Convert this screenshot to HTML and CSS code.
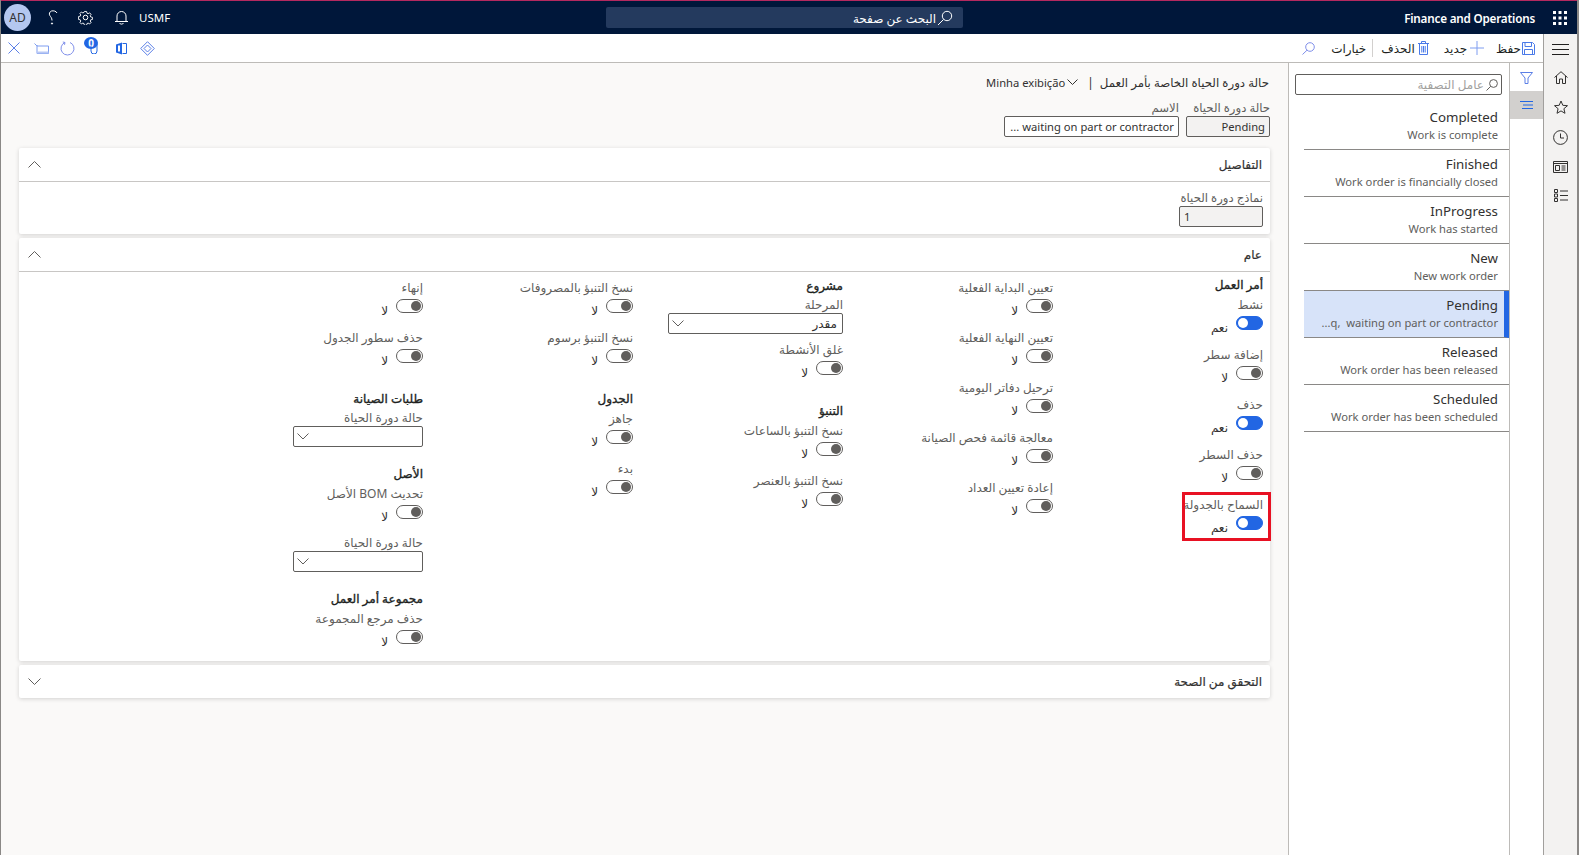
FILE: index.html
```html
<!DOCTYPE html>
<html lang="ar" dir="rtl">
<head>
  <meta charset="UTF-8">
  <title>Finance and Operations</title>
  <link rel="stylesheet" href="styles.css">
</head>
<body>
  <header class="topbar">
    <div class="top-right">
      <svg class="waffle" width="14" height="14" viewBox="0 0 14 14" fill="#fff"><rect x="0" y="0" width="3" height="3"/><rect x="5.500" y="0" width="3" height="3"/><rect x="11" y="0" width="3" height="3"/><rect x="0" y="5.500" width="3" height="3"/><rect x="5.500" y="5.500" width="3" height="3"/><rect x="11" y="5.500" width="3" height="3"/><rect x="0" y="11" width="3" height="3"/><rect x="5.500" y="11" width="3" height="3"/><rect x="11" y="11" width="3" height="3"/></svg>
      <span class="app-name" dir="ltr">Finance and Operations</span>
    </div>
    <div class="top-search">
      <svg width="16" height="16" viewBox="0 0 16 16" fill="none" stroke="#fff" stroke-width="1"><circle cx="10" cy="6" r="4.700"/><path d="M6.600 9.400 1 15"/></svg>
      <span>البحث عن صفحة</span>
    </div>
    <div class="top-left">
      <span class="company" dir="ltr">USMF</span>
      <svg class="top-bell" width="13" height="15" viewBox="0 0 13 15" fill="none" stroke="#fff" stroke-width="1"><path d="M2 11.500V6a4.500 4.500 0 0 1 9 0v5.500M0 11.500h13M4.500 13c.5 1.500 3.500 1.500 4 0"/></svg>
      <svg class="top-gear" width="15" height="15" viewBox="0 0 15 15" fill="none" stroke="#fff" stroke-width="1"><circle cx="7.500" cy="7.500" r="2.300"/><path d="M6.300.8h2.400l.4 1.900 1.300.6 1.700-1 1.600 1.700-1 1.600.6 1.300 1.900.4v2.400l-1.900.4-.6 1.300 1 1.600-1.600 1.700-1.700-1-1.300.6-.4 1.900H6.300l-.4-1.900-1.300-.6-1.700 1-1.600-1.700 1-1.600-.6-1.300-1.900-.4V6.400l1.900-.4.6-1.300-1-1.600 1.600-1.700 1.700 1 1.300-.6z" transform="translate(.75 .75) scale(.9)"/></svg>
      <svg class="top-help" width="10" height="15" viewBox="0 0 10 15" fill="none" stroke="#fff" stroke-width="1"><path d="M9 3C8 1 5.500.5 3.500 1 1.500 1.800.8 3.800 1.800 5.500 2.800 7 4 8 4 10.500"/><circle cx="4" cy="13.500" r=".6" fill="#fff"/></svg>
      <span class="avatar" dir="ltr">AD</span>
    </div>
  </header>

  <div class="shell">
    <nav class="side-nav">
      <svg width="17" height="11" viewBox="0 0 17 11" fill="none" stroke="#201f1e"><path d="M0 .500h17M0 5.500h17M0 10.500h17"/></svg>
      <svg width="14" height="13" viewBox="0 0 14 13" fill="none" stroke="#323130"><path d="M.5 6.500 7 .7l6.500 5.800M2.500 5v7.500h3V8h3v4.500h3V5"/></svg>
      <svg width="14" height="14" viewBox="0 0 14 14" fill="none" stroke="#323130"><path d="M7 1l1.800 4.300 4.700.4-3.600 3 1.100 4.600L7 10.900l-4 2.400 1.100-4.600-3.600-3 4.700-.4z"/></svg>
      <svg width="15" height="15" viewBox="0 0 15 15" fill="none" stroke="#323130"><circle cx="7.500" cy="7.500" r="6.900"/><path d="M7.500 3.500v4.500H11"/></svg>
      <svg width="15" height="12" viewBox="0 0 15 12" fill="none" stroke="#323130"><path d="M.5.500h14v11H.5zM.5 2.500h14M2.500 4.500h4v5h-4zM8.500 5h4M8.500 7h4M8.500 9h4"/></svg>
      <svg width="14" height="13" viewBox="0 0 14 13" fill="none" stroke="#323130"><path d="M.5.500h3v3h-3zM.5 5h3v3h-3zM.5 9.500h3v3h-3zM6 2h8M6 6.500h8M6 11h8"/></svg>
    </nav>

    <div class="workspace">
      <div class="toolbar">
        <div class="actions">
          <span class="action action-save">
            <svg width="13" height="13" viewBox="0 0 13 13" fill="none" stroke="#4a7ae8"><path d="M.5.500h10l2 2v10H.5zM3 .500v4h6.500v-4M2.500 12.500v-5h8v5"/></svg>
            <span>حفظ</span>
          </span>
          <span class="action action-new">
            <svg width="14" height="14" viewBox="0 0 14 14" fill="none" stroke="#7f9df0"><path d="M7 0v14M0 7h14"/></svg>
            <span>جديد</span>
          </span>
          <span class="action action-delete">
            <svg width="11" height="14" viewBox="0 0 11 14" fill="none" stroke="#4a7ae8"><path d="M0 2.500h11M3.500 2.500V.500h4v2M1.500 2.500v11h8v-11M3.800 5v6.500M5.500 5v6.500M7.200 5v6.500"/></svg>
            <span>الحذف</span>
          </span>
          <span class="tool-sep"></span>
          <span class="action options">خيارات</span>
          <svg class="tool-search" width="13" height="13" viewBox="0 0 13 13" fill="none" stroke="#7f8fea"><circle cx="8" cy="5" r="4.300"/><path d="M5 8.200.5 12.500"/></svg>
        </div>
        <div class="quick-icons">
          <svg class="q-close" width="12" height="12" viewBox="0 0 12 12" fill="none" stroke="#5b7fe6"><path d="M11.500.5l-11 11M.5.500l11 11"/></svg>
          <svg class="q-folder" width="15" height="12" viewBox="0 0 15 12" fill="none" stroke="#7f9df0"><path d="M.5 1.500 3 4h11.500v7.500H3V3"/><path d="M3 10.500h11.500" stroke="#b9c8f4" stroke-width="2"/></svg>
          <svg class="q-refresh" width="15" height="15" viewBox="0 0 15 15" fill="none" stroke="#7f8fea"><path d="M5 1.500a6.500 6.500 0 1 0 5 0M5 1.500 2.800 1M5 1.500 4.500 3.800"/></svg>
          <span class="attach"><span class="attach-count" dir="ltr">0</span>
            <svg width="8" height="11" viewBox="0 0 8 11" fill="none" stroke="#2266e3"><path d="M7 1v7a3 3 0 0 1-6 0V3"/></svg>
          </span>
          <svg class="q-office" width="12" height="13" viewBox="0 0 12 13" fill="none"><path d="M1 2.500 7 .500v12l-6-2z" fill="#2266e3"/><path d="M4 3.500v6" stroke="#fff" stroke-width="2"/><path d="M7.500 1.500h4v10h-4" stroke="#2266e3"/></svg>
          <svg class="q-power" width="15" height="15" viewBox="0 0 15 15" fill="none" stroke="#5b7fe6"><path d="M7.500.7 14.300 7.500 7.500 14.300.7 7.500z"/><path d="M7.500 4 11 7.500 7.500 11 4 7.500z"/></svg>
        </div>
      </div>

      <div class="panes">
        <aside class="rail">
          <svg class="rail-filter" width="13" height="12" viewBox="0 0 13 12" fill="none" stroke="#5b7fe6"><path d="M.5.500h12L8 6v5.500H5V6z"/></svg>
          <div class="rail-active">
            <svg width="13" height="8" viewBox="0 0 13 8" fill="none" stroke="#2266e3"><path d="M0 .500h13M3 4h10M2 7.500h11"/></svg>
          </div>
        </aside>

        <aside class="filter-pane">
          <div class="filter-box">
            <svg width="12" height="12" viewBox="0 0 12 12" fill="none" stroke="#605e5c"><circle cx="7.500" cy="4.500" r="3.900"/><path d="M4.700 7.300.5 11.500"/></svg>
            <span>عامل التصفية</span>
          </div>
          <ul class="status-list">
            <li><b>Completed</b><span>Work is complete</span></li>
            <li><b>Finished</b><span>Work order is financially closed</span></li>
            <li><b>InProgress</b><span>Work has started</span></li>
            <li><b>New</b><span>New work order</span></li>
            <li class="selected"><b>Pending</b><span>...q,  waiting on part or contractor</span></li>
            <li><b>Released</b><span>Work order has been released</span></li>
            <li><b>Scheduled</b><span>Work order has been scheduled</span></li>
          </ul>
        </aside>

        <main class="content">
          <div class="page-title">
            <span>حالة دورة الحياة الخاصة بأمر العمل</span>
            <span class="title-bar">|</span>
            <svg width="11" height="6" viewBox="0 0 11 6" fill="none" stroke="#323130"><path d="M.5.500 5.500 5.500 10.500.500"/></svg>
            <span class="view-name" dir="ltr">Minha exibição</span>
          </div>
          <div class="record-fields">
            <div class="record-field narrow">
              <label>حالة دورة الحياة</label>
              <div class="input readonly latin">Pending</div>
            </div>
            <div class="record-field wide">
              <label>الاسم</label>
              <div class="input latin" dir="ltr">... waiting on part or contractor</div>
            </div>
          </div>

          <section class="card">
            <div class="card-head">
              <h3>التفاصيل</h3>
              <svg width="13" height="7" viewBox="0 0 13 7" fill="none" stroke="#605e5c"><path d="M.5 6.500 6.500.5l6 6"/></svg>
            </div>
            <div class="details-body">
              <label>نماذج دورة الحياة</label>
              <div class="input readonly number latin">1</div>
            </div>
          </section>

          <section class="card">
            <div class="card-head">
              <h3>عام</h3>
              <svg width="13" height="7" viewBox="0 0 13 7" fill="none" stroke="#605e5c"><path d="M.5 6.500 6.500.5l6 6"/></svg>
            </div>
            <div class="general-body">
              <div class="col">
                <h4>أمر العمل</h4>
                <div class="field"><label>نشط</label><div class="switch-row"><span class="switch on"></span><span class="value">نعم</span></div></div>
                <div class="field"><label>إضافة سطر</label><div class="switch-row"><span class="switch"></span><span class="value">لا</span></div></div>
                <div class="field"><label>حذف</label><div class="switch-row"><span class="switch on"></span><span class="value">نعم</span></div></div>
                <div class="field"><label>حذف السطر</label><div class="switch-row"><span class="switch"></span><span class="value">لا</span></div></div>
                <div class="field"><label>السماح بالجدولة</label><div class="switch-row"><span class="switch on"></span><span class="value">نعم</span></div><span class="red-box"></span></div>
              </div>
              <div class="col plain">
                <div class="field"><label>تعيين البداية الفعلية</label><div class="switch-row"><span class="switch"></span><span class="value">لا</span></div></div>
                <div class="field"><label>تعيين النهاية الفعلية</label><div class="switch-row"><span class="switch"></span><span class="value">لا</span></div></div>
                <div class="field"><label>ترحيل دفاتر اليومية</label><div class="switch-row"><span class="switch"></span><span class="value">لا</span></div></div>
                <div class="field"><label>معالجة قائمة فحص الصيانة</label><div class="switch-row"><span class="switch"></span><span class="value">لا</span></div></div>
                <div class="field"><label>إعادة تعيين العداد</label><div class="switch-row"><span class="switch"></span><span class="value">لا</span></div></div>
              </div>
              <div class="col project">
                <h4>مشروع</h4>
                <div class="select-field"><label>المرحلة</label>
                  <div class="select wide"><span>مقدر</span><svg width="12" height="7" viewBox="0 0 12 7" fill="none" stroke="#605e5c"><path d="M.5.500l5.500 5.500 5.500-5.500"/></svg></div>
                </div>
                <div class="field"><label>غلق الأنشطة</label><div class="switch-row"><span class="switch"></span><span class="value">لا</span></div></div>
                <h4 class="later">التنبؤ</h4>
                <div class="field"><label>نسخ التنبؤ بالساعات</label><div class="switch-row"><span class="switch"></span><span class="value">لا</span></div></div>
                <div class="field"><label>نسخ التنبؤ بالعنصر</label><div class="switch-row"><span class="switch"></span><span class="value">لا</span></div></div>
              </div>
              <div class="col plain">
                <div class="field"><label>نسخ التنبؤ بالمصروفات</label><div class="switch-row"><span class="switch"></span><span class="value">لا</span></div></div>
                <div class="field"><label>نسخ التنبؤ برسوم</label><div class="switch-row"><span class="switch"></span><span class="value">لا</span></div></div>
                <h4 class="later">الجدول</h4>
                <div class="field"><label>جاهز</label><div class="switch-row"><span class="switch"></span><span class="value">لا</span></div></div>
                <div class="field"><label>بدء</label><div class="switch-row"><span class="switch"></span><span class="value">لا</span></div></div>
              </div>
              <div class="col plain">
                <div class="field"><label>إنهاء</label><div class="switch-row"><span class="switch"></span><span class="value">لا</span></div></div>
                <div class="field"><label>حذف سطور الجدول</label><div class="switch-row"><span class="switch"></span><span class="value">لا</span></div></div>
                <h4 class="later">طلبات الصيانة</h4>
                <div class="select-field"><label>حالة دورة الحياة</label>
                  <div class="select"><span></span><svg width="12" height="7" viewBox="0 0 12 7" fill="none" stroke="#605e5c"><path d="M.5.500l5.500 5.500 5.500-5.500"/></svg></div>
                </div>
                <h4 class="later">الأصل</h4>
                <div class="field"><label>تحديث BOM الأصل</label><div class="switch-row"><span class="switch"></span><span class="value">لا</span></div></div>
                <div class="select-field"><label>حالة دورة الحياة</label>
                  <div class="select"><span></span><svg width="12" height="7" viewBox="0 0 12 7" fill="none" stroke="#605e5c"><path d="M.5.500l5.500 5.500 5.500-5.500"/></svg></div>
                </div>
                <h4 class="later">مجموعة أمر العمل</h4>
                <div class="field"><label>حذف مرجع المجموعة</label><div class="switch-row"><span class="switch"></span><span class="value">لا</span></div></div>
              </div>
            </div>
          </section>

          <section class="card">
            <div class="card-head closed">
              <h3>التحقق من الصحة</h3>
              <svg width="13" height="7" viewBox="0 0 13 7" fill="none" stroke="#605e5c"><path d="M.5.500l6 6 6-6"/></svg>
            </div>
          </section>
        </main>
      </div>
    </div>
  </div>
</body>
</html>
```
FILE: styles.css
```css
html,
body {
  height: 100%;
}

body {
  margin: 0;
  font-family: "Noto Sans", "DejaVu Sans", sans-serif;
  font-size: 12px;
  color: #323130;
  background: #fff;
  display: flex;
  flex-direction: column;
  overflow: hidden;
  border-left: 1px solid #8a8886;
  border-right: 2px solid #8a8886;
  box-sizing: border-box;
}

.latin {
  font-size: 11.200px;
}

/* top bar */
.topbar {
  height: 34px;
  flex: none;
  box-sizing: border-box;
  background: #00173a;
  border-top: 1px solid #b4295f;
  color: #fff;
  display: grid;
  grid-template-columns: 614px 357px 1fr;
  align-items: center;
}

.top-right {
  display: flex;
  align-items: center;
  gap: 18px;
  padding-right: 10px;
}

.app-name {
  font-size: 11.700px;
  font-weight: 600;
  letter-spacing: -0.2px;
}

.top-search {
  height: 21px;
  background: #243a5e;
  border-radius: 2px;
  display: flex;
  align-items: center;
  gap: 1px;
  padding-right: 10px;
}

.top-search span {
  padding-top: 1px;
}

.top-left {
  display: flex;
  align-items: center;
  justify-content: flex-end;
  padding-left: 3px;
}

.company {
  font-size: 11.500px;
  margin-left: 11px;
}

.top-bell {
  margin-left: 22px;
}

.top-gear {
  margin-left: 20px;
}

.top-help {
  margin-left: 17px;
}

.avatar {
  width: 27px;
  height: 27px;
  border-radius: 50%;
  background: #b4c7f0;
  color: #323130;
  display: flex;
  align-items: center;
  justify-content: center;
}

/* shell */
.shell {
  flex: 1;
  display: flex;
  min-height: 0;
}

.side-nav {
  width: 34px;
  flex: none;
  box-sizing: border-box;
  background: #f3f2f1;
  border-left: 1px solid #a19f9d;
  display: flex;
  flex-direction: column;
  align-items: center;
  gap: 16px;
  padding-top: 10px;
}

.workspace {
  flex: 1;
  min-width: 0;
  display: flex;
  flex-direction: column;
}

.toolbar {
  height: 29px;
  flex: none;
  box-sizing: border-box;
  border-bottom: 1px solid #bdbbb8;
  background: #fff;
  display: flex;
  justify-content: space-between;
  align-items: center;
  padding-right: 8px;
}

.actions {
  display: flex;
  align-items: center;
}

.action {
  display: flex;
  align-items: center;
  gap: 3px;
  margin-left: 10px;
  color: #201f1e;
}

.action-save {
  gap: 1px;
  margin-left: 12px;
}

.action-new {
  margin-left: 15px;
}

.action-delete {
  margin-left: 8px;
}

.tool-sep {
  width: 1px;
  height: 18px;
  background: #d2d0ce;
  margin-left: 6px;
}

.tool-search {
  margin-right: 6px;
}

.quick-icons {
  display: flex;
  align-items: center;
  flex-direction: row-reverse;
  padding-left: 7px;
}

.q-folder {
  margin-left: 14px;
}

.q-refresh {
  margin-left: 11px;
}

.q-office {
  margin-left: 17px;
}

.q-power {
  margin-left: 13px;
}

.attach {
  position: relative;
  width: 16px;
  height: 17px;
  margin: -5px 0 0 7px;
}

.attach-count {
  display: block;
  width: 14px;
  height: 12px;
  border-radius: 50%;
  background: #2266e3;
  color: #fff;
  font-size: 10px;
  font-weight: 700;
  line-height: 12px;
  text-align: center;
}

.attach svg {
  position: absolute;
  left: 8px;
  top: 6px;
}

.panes {
  flex: 1;
  display: flex;
  min-height: 0;
}

.rail {
  width: 34px;
  flex: none;
  box-sizing: border-box;
  border-left: 1px solid #bdbbb8;
  background: #fff;
  display: flex;
  flex-direction: column;
  align-items: center;
}

.rail-filter {
  margin-top: 9px;
}

.rail-active {
  width: 100%;
  height: 28px;
  margin-top: 7px;
  background: #d2d0ce;
  display: flex;
  align-items: center;
  justify-content: center;
}

/* filter pane */
.filter-pane {
  width: 221px;
  flex: none;
  box-sizing: border-box;
  border-left: 1px solid #bdbbb8;
  background: #fff;
}

.filter-box {
  width: 207px;
  height: 21px;
  box-sizing: border-box;
  margin: 11px 7px 0 0;
  border: 1px solid #605e5c;
  border-radius: 2px;
  display: flex;
  align-items: center;
  gap: 2px;
  padding-right: 3px;
  color: #a19f9d;
}

.status-list {
  list-style: none;
  margin: 8px 0 0 0;
  padding: 0;
  width: 205px;
}

.status-list li {
  height: 47px;
  box-sizing: border-box;
  border-bottom: 1px solid #8a8886;
  padding: 4px 11px 0 0;
  display: flex;
  flex-direction: column;
}

.status-list b {
  font-size: 13.300px;
  font-weight: 400;
  line-height: 20px;
  color: #323130;
  direction: ltr;
  text-align: right;
}

.status-list span {
  font-size: 11.200px;
  line-height: 16px;
  color: #605e5c;
  white-space: pre;
  direction: ltr;
  text-align: right;
}

.status-list .selected {
  background: #d7e3f9;
  border-right: 5px solid #2266e3;
  padding-right: 6px;
}

/* main content */
.content {
  flex: 1;
  min-width: 0;
  background: #faf9f8;
  padding: 9px 19px 0 18px;
  overflow: hidden;
}

.page-title {
  display: flex;
  align-items: center;
  height: 20px;
  gap: 2px;
  font-size: 11.800px;
}

.title-bar {
  margin: 0 4px 0 7px;
}

.view-name {
  font-size: 11.200px;
}

.record-fields {
  display: flex;
  gap: 7px;
  margin: 7px -1px 11px 0;
}

.record-field label,
.details-body label {
  display: block;
  height: 17px;
  line-height: 17px;
  color: #605e5c;
  font-size: 11.700px;
}

.narrow {
  width: 84px;
}

.wide {
  width: 175px;
}

.input {
  height: 21px;
  box-sizing: border-box;
  border: 1px solid #605e5c;
  border-radius: 2px;
  line-height: 19px;
  padding: 0 4px;
  background: #fff;
  text-align: right;
  white-space: nowrap;
  overflow: hidden;
}

.readonly {
  background: #f3f2f1;
}

.card {
  margin: 0 -1px 4px 0;
  background: #fff;
  border-radius: 2px;
  box-shadow: 0 1px 4px rgba(0, 0, 0, 0.16);
}

.card-head {
  height: 34px;
  box-sizing: border-box;
  border-bottom: 1px solid #c8c6c4;
  display: flex;
  align-items: center;
  justify-content: space-between;
  padding: 0 8px 0 9px;
}

.card-head.closed {
  height: 33px;
  border-bottom: 0;
}

.card-head h3 {
  margin: 0;
  font-size: 12px;
  font-weight: 400;
  -webkit-text-stroke: 0.2px #323130;
}

.details-body {
  height: 52px;
  box-sizing: border-box;
  padding: 7px 7px 0 0;
}

.number {
  width: 84px;
  text-align: left;
}

/* general tab */
.general-body {
  display: grid;
  grid-template-columns: repeat(5, 210px);
  padding: 3px 7px 2px 0;
}

.col {
  display: flex;
  flex-direction: column;
}

.col.plain {
  padding-top: 3px;
}

.col.project {
  padding-top: 1px;
}

.col h4 {
  margin: 0;
  height: 20px;
  line-height: 20px;
  font-size: 12px;
  font-weight: 400;
  color: #201f1e;
  -webkit-text-stroke: 0.35px #201f1e;
}

.col h4.later {
  margin-top: 11px;
}

.field {
  position: relative;
  height: 50px;
}

.field label,
.select-field label {
  display: block;
  line-height: 20px;
  height: 20px;
  color: #605e5c;
  white-space: nowrap;
}

.switch-row {
  display: flex;
  gap: 8px;
  margin-top: 1px;
}

.switch {
  width: 27px;
  height: 14px;
  flex: none;
  box-sizing: border-box;
  border: 1px solid #605e5c;
  border-radius: 7px;
  background: #fff;
  display: flex;
  align-items: center;
  justify-content: flex-start;
  padding: 0 1px;
}

.switch::before {
  content: "";
  width: 10px;
  height: 10px;
  border-radius: 50%;
  background: #605e5c;
}

.switch.on {
  background: #2266e3;
  border-color: #2266e3;
  justify-content: flex-end;
}

.switch.on::before {
  background: #fff;
}

.value {
  line-height: 20px;
  margin-top: 2px;
}

.select-field {
  margin-bottom: 6px;
}

.select-field label {
  height: 17px;
  line-height: 17px;
}

.select {
  width: 130px;
  height: 21px;
  box-sizing: border-box;
  border: 1px solid #605e5c;
  border-radius: 2px;
  background: #fff;
  display: flex;
  align-items: center;
  justify-content: space-between;
  padding: 0 5px 0 3px;
}

.select.wide {
  width: 175px;
}

.red-box {
  position: absolute;
  top: -3px;
  right: -8px;
  width: 89px;
  height: 49px;
  box-sizing: border-box;
  border: 3px solid #e81123;
  pointer-events: none;
}
```
